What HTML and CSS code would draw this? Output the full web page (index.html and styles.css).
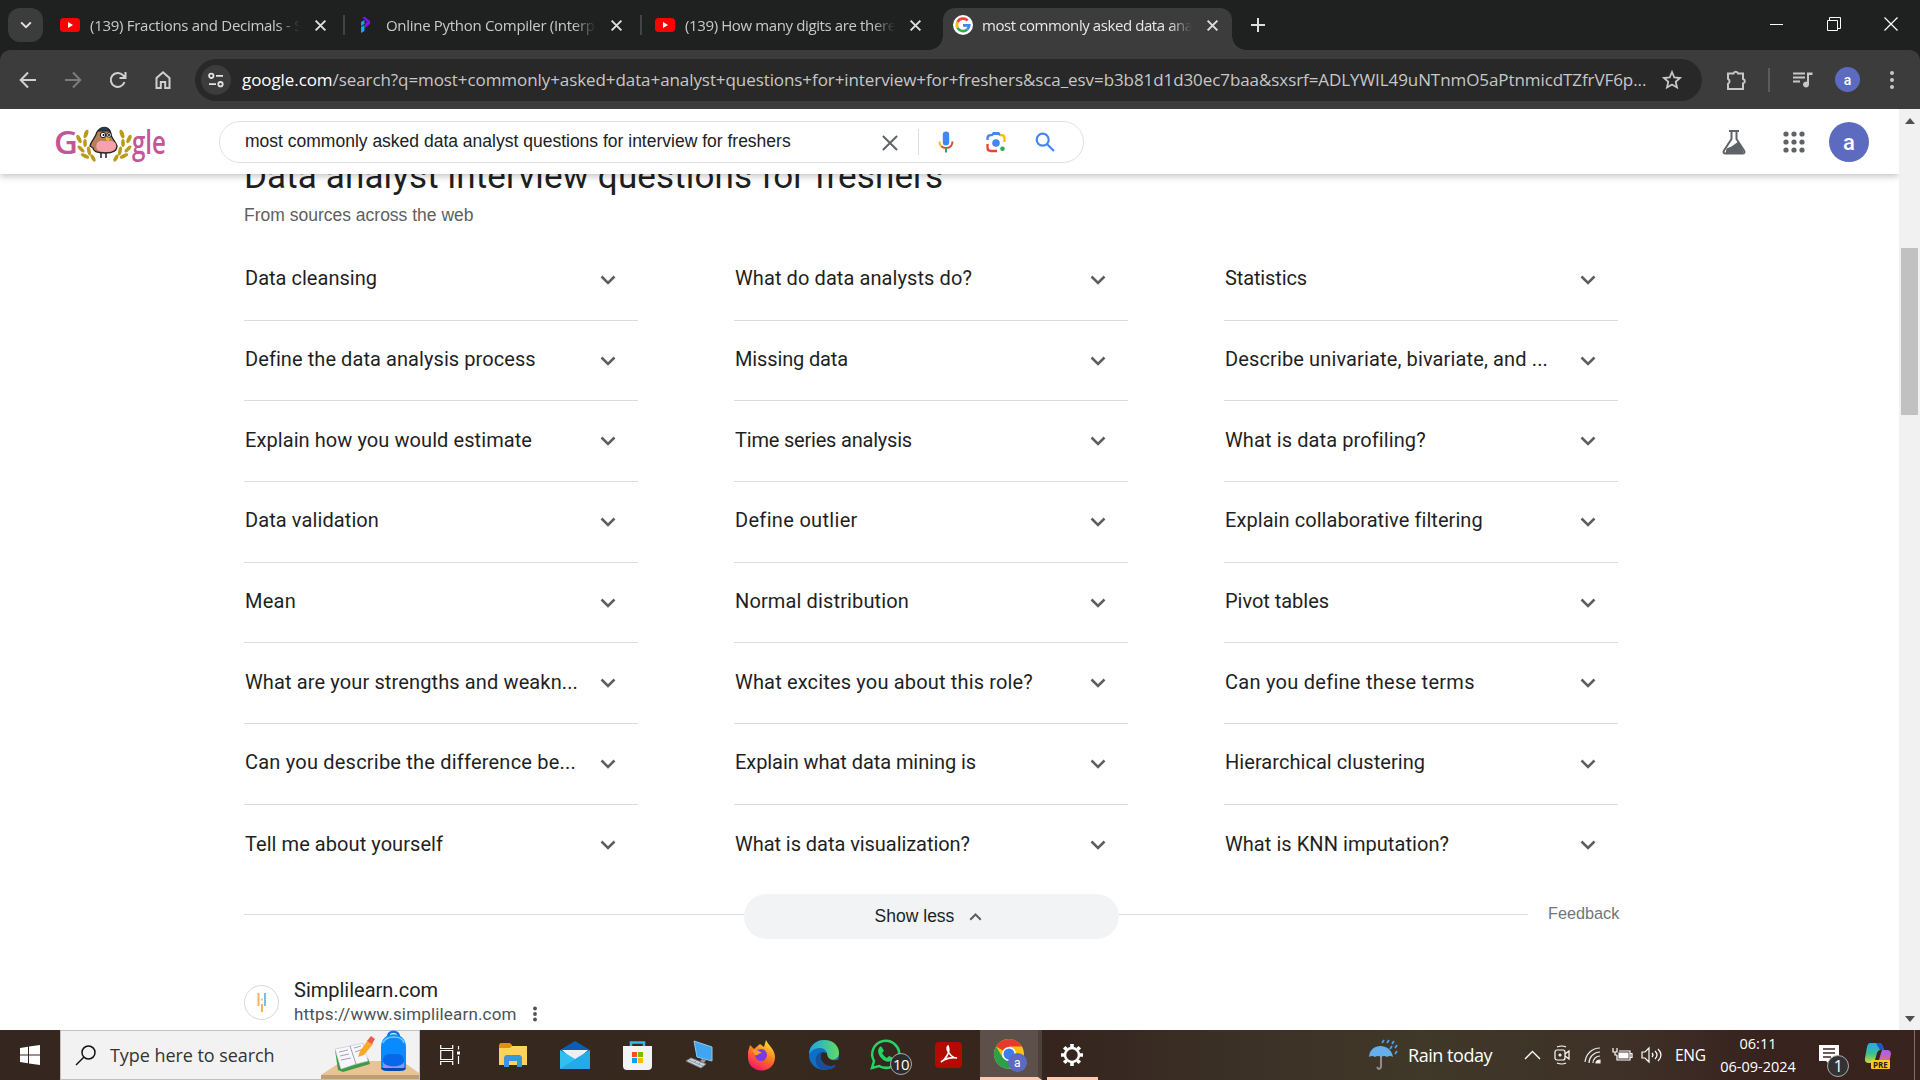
FILE: index.html
```html
<!DOCTYPE html>
<html lang="en">
<head>
<meta charset="utf-8">
<title>most commonly asked data analyst questions - Google Search</title>
<link rel="stylesheet" href="styles.css">
</head>
<body>
<svg class="defs" aria-hidden="true">
  <symbol id="x" viewBox="0 0 12 12"><path d="M1.5 1.5l9 9M10.5 1.5l-9 9" fill="none" stroke="currentColor" stroke-width="1.8"/></symbol>
  <symbol id="down" viewBox="0 0 16 10"><path d="M1.5 1.5L8 8l6.500-6.500" fill="none" stroke="currentColor" stroke-width="2.500"/></symbol>
  <symbol id="yt" viewBox="0 0 20 14"><rect width="20" height="14" rx="3.500" fill="#f00"/><path d="M8 4l5 3-5 3z" fill="#fff"/></symbol>
</svg>

<div class="tabstrip">
  <div class="tab-search"><svg width="12" height="8" viewBox="0 0 16 10"><use href="#down"/></svg></div>
  <div class="tab"><svg class="fav" width="20" height="14"><use href="#yt"/></svg><span class="tab-title t1">(139) Fractions and Decimals - SSC</span><svg class="tab-x"><use href="#x"/></svg></div>
  <div class="tab"><svg class="fav" width="20" height="20" viewBox="0 0 20 20"><path d="M6 2h3l5 4v3l-5 4V9l2-2z" fill="#7b12f5"/><path d="M5 7l3.500-2v4L5 11z" fill="#1d9bf0"/><path d="M5 12l3.500-2v6L5 18z" fill="#14a4ff"/></svg><span class="tab-title t2">Online Python Compiler (Interpreter)</span><svg class="tab-x"><use href="#x"/></svg></div>
  <div class="tab"><svg class="fav" width="20" height="14"><use href="#yt"/></svg><span class="tab-title t3">(139) How many digits are there in</span><svg class="tab-x"><use href="#x"/></svg></div>
  <div class="tab active"><svg class="fav" width="20" height="20" viewBox="0 0 48 48"><circle cx="24" cy="24" r="24" fill="#fff"/><g fill="none" stroke-width="6.500"><path d="M11 17a15 15 0 0 1 24-4" stroke="#ea4335"/><path d="M11 31a15 15 0 0 1 0-14" stroke="#fbbc05"/><path d="M34 35a15 15 0 0 1-23-4" stroke="#34a853"/><path d="M24 25h15a15 15 0 0 1-5 10" stroke="#4285f4"/></g></svg><span class="tab-title t4">most commonly asked data analyst</span><svg class="tab-x"><use href="#x"/></svg></div>
  <svg class="newtab" width="14" height="14" viewBox="0 0 14 14"><path d="M7 0v14M0 7h14" stroke="#dedede" stroke-width="2"/></svg>
  <div class="winbtns">
    <svg width="14" height="14"><path d="M0 7.500h13" stroke="#fff"/></svg>
    <svg width="14" height="14" fill="none" stroke="#fff"><path d="M.5 3.500h10v10H.5zM2.500 3V.5h11v11H11"/></svg>
    <svg width="14" height="14"><path d="M.5.5l13 13M13.500.5l-13 13" stroke="#fff" stroke-width="1.200"/></svg>
  </div>
</div>

<div class="toolbar">
  <svg class="nav" viewBox="0 0 18 18"><path d="M17 9H2M9 1.500L1.700 9 9 16.500"/></svg>
  <svg class="nav dim" viewBox="0 0 18 18"><path d="M1 9h15M9 1.500L16.300 9 9 16.500"/></svg>
  <svg class="nav" viewBox="0 0 18 18"><path d="M15.500 11A7 7 0 1 1 14 4.200l2 2M16.500 1v6h-6"/></svg>
  <svg class="nav" viewBox="0 0 18 18"><path d="M2.500 17V7L9 1.300 15.500 7v10h-4.300v-6H6.800v6z"/></svg>
  <div class="omnibox">
    <div class="site"><svg width="16" height="16" viewBox="0 0 16 16" fill="none" stroke="#e3e3e3" stroke-width="1.800"><circle cx="3.300" cy="3.800" r="2.200"/><path d="M8 3.800h7M1 12.200h7"/><circle cx="12.500" cy="12.200" r="2.200"/></svg></div>
    <span class="url"><b>google.com</b>/search?q=most+commonly+asked+data+analyst+questions+for+interview+for+freshers&amp;sca_esv=b3b81d1d30ec7baa&amp;sxsrf=ADLYWIL49uNTnmO5aPtnmicdTZfrVF6p...</span>
    <svg class="star" width="20" height="20" viewBox="0 0 20 20"><path d="M10 2l2.300 5.500 5.700.5-4.300 3.800 1.300 5.700-5-3-5 3 1.300-5.700L2 8l5.700-.5z" fill="none" stroke="#c7c7c7" stroke-width="1.800"/></svg>
  </div>
  <div class="tools">
    <svg width="22" height="22" viewBox="0 0 22 22"><path d="M2 4.500h5.500a2.300 2.300 0 0 1 4.500 0h5v5.500a2.300 2.300 0 0 1 0 4.500V20H2v-5.200a2.800 2.800 0 0 0 0-5z" fill="none" stroke="#c7c7c7" stroke-width="2"/></svg>
    <i class="bar"></i>
    <svg width="20" height="18" viewBox="0 0 20 18"><path d="M0 2.500h12M0 6.500h12M0 10.500h7" stroke="#c7c7c7" stroke-width="2"/><path d="M14 1.500h5.500v2.500H16v9.500a3 3 0 1 1-2-2.800z" fill="#c7c7c7"/></svg>
    <span class="avatar small">a</span>
    <svg width="6" height="20" viewBox="0 0 6 20" fill="#c7c7c7"><circle cx="3" cy="3" r="2"/><circle cx="3" cy="10" r="2"/><circle cx="3" cy="17" r="2"/></svg>
  </div>
</div>

<div class="window">
  <div class="page">
    <header class="header">
      <svg class="logo" width="112" height="40" viewBox="0 0 112 40">
        <text class="mark" x="-1" y="32" textLength="24" lengthAdjust="spacingAndGlyphs">G</text>
        <text class="mark" x="77" y="32" textLength="34" lengthAdjust="spacingAndGlyphs">gle</text>
        <g transform="translate(0 2)">
        <g fill="#b99a1c"><ellipse cx="31" cy="10" rx="2" ry="4.500" transform="rotate(20 31 10)"/><ellipse cx="24" cy="15" rx="2" ry="4.500" transform="rotate(-25 24 15)"/><ellipse cx="30" cy="19" rx="1.800" ry="4"/><ellipse cx="26" cy="25" rx="1.800" ry="4.500" transform="rotate(-45 26 25)"/><ellipse cx="34" cy="27" rx="1.800" ry="4.500" transform="rotate(-10 34 27)"/><ellipse cx="30" cy="32" rx="1.800" ry="4.500" transform="rotate(-65 30 32)"/><ellipse cx="38" cy="34" rx="1.800" ry="4" transform="rotate(-30 38 34)"/>
        <ellipse cx="67" cy="10" rx="2" ry="4.500" transform="rotate(-20 67 10)"/><ellipse cx="74" cy="15" rx="2" ry="4.500" transform="rotate(25 74 15)"/><ellipse cx="68" cy="19" rx="1.800" ry="4"/><ellipse cx="73" cy="25" rx="1.800" ry="4.500" transform="rotate(45 73 25)"/><ellipse cx="65" cy="27" rx="1.800" ry="4.500" transform="rotate(10 65 27)"/><ellipse cx="69" cy="32" rx="1.800" ry="4.500" transform="rotate(65 69 32)"/><ellipse cx="61" cy="34" rx="1.800" ry="4" transform="rotate(30 61 34)"/></g>
        <path d="M46 29v5M51 29v5" fill="none" stroke="#222" stroke-width="1.500"/>
        <path d="M42 8c3-5 13-5 14 2 0 4 5 8 6 12 0 5-4 7-12 7s-12-2-12-5l-3-2c1-5 5-7 7-14z" fill="#b98058" stroke="#222" stroke-width="1.300"/>
        <path d="M42 19c4-4 7-1 11-2 6-1 9 3 8 6-1 4-5 5-11 5-8 0-10-4-8-9z" fill="#f7a0ae"/>
        <path d="M43 7c2-5 11-5 12 0z" fill="#263b58" stroke="#222"/>
        <circle cx="48" cy="11" r="2.700" fill="#fff" stroke="#222"/><circle cx="54" cy="11" r="2.300" fill="#fff" stroke="#222"/><circle cx="48.500" cy="11" r="1"/><circle cx="54" cy="11" r="1"/>
        <path d="M51 13l4 1-2 4-2-2z" fill="#e5b91c"/>
        </g>
      </svg>
      <div class="searchbox">
        <span class="query">most commonly asked data analyst questions for interview for freshers</span>
        <svg class="clear" width="16" height="16" viewBox="0 0 12 12"><path d="M.7.7l10.600 10.600M11.300.7L.7 11.300" stroke="#5f6368" stroke-width="1.500"/></svg>
        <i></i>
        <svg width="24" height="24" viewBox="0 0 24 24"><rect x="8.800" y="1.500" width="6.400" height="14" rx="3.200" fill="#4285f4"/><path d="M5.500 11.500c0 2 .6 3.500 1.800 4.700" fill="none" stroke="#fbbc04" stroke-width="2"/><path d="M7.300 16.200c2.500 2.400 7 2.400 9.500 0 1.200-1.300 1.700-2.800 1.700-4.700" fill="none" stroke="#ea4335" stroke-width="2"/><path d="M12 18v4.500" stroke="#34a853" stroke-width="2"/></svg>
        <svg width="24" height="24" viewBox="0 0 24 24" fill="none" stroke-width="2.300"><path d="M3.500 10V8.500c0-2 1.500-3.300 3.300-3.300H8l1.500-2h5l1.500 2" stroke="#4285f4"/><path d="M9 2.500h6v2.500H9z" fill="#4285f4"/><path d="M16 5.200h1.500c2 0 3 1.500 3 3.300V12" stroke="#fbbc04"/><path d="M3.500 14v3.500c0 2 1.300 3.500 3.300 3.500H13" stroke="#ea4335"/><circle cx="12" cy="13" r="3.800" fill="#4285f4"/><circle cx="18.500" cy="18.800" r="2.300" fill="#34a853"/></svg>
        <svg width="22" height="22" viewBox="0 0 22 22" fill="none" stroke="#4285f4" stroke-width="2.200"><circle cx="8.700" cy="8.700" r="6"/><path d="M13 13l7 7"/></svg>
      </div>
      <div class="account">
        <svg width="24" height="26" viewBox="0 0 24 26"><path d="M7 2h10M9.500 2v8L2 21.500C1 23 1.500 24.500 3.500 24.500h17c2 0 2.500-1.500 1.500-3L14.500 10V2" fill="none" stroke="#5f6368" stroke-width="2"/><path d="M4.500 19.500l5-2 7-5 5 10-1 2h-17z" fill="#5f6368"/></svg>
        <svg width="22" height="22" viewBox="0 0 22 22" fill="#5f6368"><circle cx="3" cy="3" r="2.600"/><circle cx="11" cy="3" r="2.600"/><circle cx="19" cy="3" r="2.600"/><circle cx="3" cy="11" r="2.600"/><circle cx="11" cy="11" r="2.600"/><circle cx="19" cy="11" r="2.600"/><circle cx="3" cy="19" r="2.600"/><circle cx="11" cy="19" r="2.600"/><circle cx="19" cy="19" r="2.600"/></svg>
        <span class="avatar">a</span>
      </div>
    </header>
    <main class="results">
      <h2>Data analyst interview questions for freshers</h2>
      <p class="sub">From sources across the web</p>
      <div class="grid" id="grid"></div>
      <div class="more"><i class="l"></i><button>Show less <svg width="13" height="9" viewBox="0 0 16 10"><path d="M1.500 9L8 2.500 14.500 9" fill="none" stroke="#5e5e5e" stroke-width="2.500"/></svg></button><i class="r"></i><span>Feedback</span></div>
      <div class="result">
        <div class="fav-ring"><svg width="12" height="20" viewBox="0 0 12 20"><path d="M2.500 1v13M6 12v8" stroke="#f2b25b" stroke-width="2"/><path d="M9 1v13" stroke="#6ec3df" stroke-width="2"/><path d="M6 6.500v2" stroke="#f2b25b" stroke-width="1.500"/></svg></div>
        <div class="site-info"><span class="name">Simplilearn.com</span><span class="link"><span class="addr">https://www.simplilearn.com</span><svg width="6" height="16" viewBox="0 0 6 16" fill="#4d5156"><circle cx="3" cy="2.500" r="1.900"/><circle cx="3" cy="8" r="1.900"/><circle cx="3" cy="13.500" r="1.900"/></svg></span></div>
      </div>
    </main>
  </div>
  <div class="scroll"><svg width="10" height="6"><path d="M0 6l5-6 5 6z" fill="#505050"/></svg><div class="thumb"></div><svg width="10" height="6"><path d="M0 0l5 6 5-6z" fill="#505050"/></svg></div>
</div>

<footer class="taskbar">
  <div class="start"><svg width="20" height="20" fill="#fff"><path d="M0 3l8-1.200v7.700H0zM9 1.600L20 0v9.500H9zM0 10.500h8v7.700L0 17zM9 10.500h11V20L9 18.400z"/></svg></div>
  <div class="tsearch">
    <svg width="21" height="21" viewBox="0 0 21 21" fill="none" stroke="#111" stroke-width="1.500"><circle cx="13.500" cy="7.500" r="6.500"/><path d="M9 12L1 20"/></svg>
    <span>Type here to search</span>
    <svg class="art" width="98" height="47" viewBox="0 0 98 47">
      <path d="M0 43l21-14h60l17 12v2z" fill="#e8c396"/><path d="M0 43h98v4H0z" fill="#c39c70"/>
      <path d="M14 18l3 20 5 2 27-8-2-6z" fill="#3d9b45"/><path d="M14 17l15-3 13-3 5 18-12 3-15 5z" fill="#f7f7fd" stroke="#c7c7da" stroke-width=".7"/><path d="M29 14l6 18M18 20l9-2M19 24l9-2M20 28l10-2M33 16l7-2M34 20l8-3" stroke="#8b8b9c" stroke-width=".8"/>
      <path d="M37 25l2-6 8-11 5 4-9 11z" fill="#f7a928"/><path d="M46 9l4-5 4 3-3 5z" fill="#ec5c4b"/>
      <path d="M67 5c0-7 11-7 11 0" fill="none" stroke="#1174e6" stroke-width="2.500"/><path d="M60 15c0-17 25-17 25 0v20c0 4-3 4-12 4s-13 0-13-4z" fill="#0a8aff"/><path d="M62 11c3-8 19-8 21 0" fill="none" stroke="#72caff" stroke-width="1.500"/><rect x="62" y="22" width="21" height="14" rx="6" fill="#0667e8"/><path d="M62 29c0 7 21 7 21 0v6c-2 3-19 3-21 0z" fill="#9d8cff"/><path d="M60 36h25c-1 3-4 3-12 3s-12 0-13-3z" fill="#0848ae"/>
    </svg>
  </div>
  <div class="apps">
    <div class="view"><svg width="21" height="20" fill="none" stroke="#fff" stroke-width="1.200"><path d="M.7 0v3.500h12V0M.7 5.500h12v9H.7zM.7 20v-3.500h12V20M18.500 1v3.500M18.500 11v8"/><path d="M17 6.500h3v3h-3z" fill="#fff" stroke="none"/></svg></div>
    <div><svg width="28" height="24"><path d="M0 1.500L1.500 0H11l2 2v5H0z" fill="#dc9500"/><path d="M0 5h11l2-2h15v19H0z" fill="#ffd35b"/><path d="M5 24V14l2-2h14l2 2v10h-5v-6h-8v6z" fill="#3a96dd"/></svg></div>
    <div><svg width="30" height="28"><path d="M0 9L15 0l15 9v5H0z" fill="#0a5fb4"/><path d="M2 9h26l-13 12z" fill="#eceff4"/><path d="M0 9l15 9 15-9v19H0z" fill="#31bff0"/><path d="M15 18l15 10H0L30 9v19z" fill="#1b9de2" opacity=".6"/></svg></div>
    <div><svg width="29" height="29"><path d="M8 6V1.500h13V6" fill="none" stroke="#36b7ef" stroke-width="2.500"/><path d="M0 5h29v20q0 4-4 4H4q-4 0-4-4z" fill="#f3f3f3"/><path d="M9 11h5v5H9z" fill="#f25022"/><path d="M15 11h5v5h-5z" fill="#7fba00"/><path d="M9 17h5v5H9z" fill="#00a4ef"/><path d="M15 17h5v5h-5z" fill="#ffb900"/></svg></div>
    <div><svg width="30" height="28"><path d="M9 0l18 6v14L12 16z" fill="#42a5f0" stroke="#8dcaf2"/><path d="M17 18l4 1-2 3-4-2z" fill="#8f9ba5"/><path d="M1 20l5-3 15 6-5 4z" fill="#cdd5db" stroke="#7b8790"/><path d="M4 19l14 6M9 22l3-3M13 24l3-3" stroke="#8c9ba8"/></svg></div>
    <div><svg width="29" height="30"><defs><linearGradient id="fx" x1=".8" y1="0" x2=".3" y2="1"><stop stop-color="#ffe83b"/><stop offset=".5" stop-color="#ff7a1c"/><stop offset="1" stop-color="#f5156c"/></linearGradient></defs><path d="M1 12l2-7 4 4 6-5 4 3 2-7c2 5 9 9 9 17 0 18-27 18-27 0z" fill="url(#fx)"/><circle cx="14" cy="15" r="6" fill="#7a3ce0"/><path d="M5 10c4-1 7 1 10 3-3 0-4 3-7 2z" fill="#ff9b2a"/></svg></div>
    <div><svg width="30" height="30" viewBox="0 0 30 30"><defs><linearGradient id="eg"><stop stop-color="#1ba4ea"/><stop offset="1" stop-color="#62dc61"/></linearGradient></defs><circle cx="15" cy="15" r="15" fill="#0f6fc4"/><path d="M0 14C1-5 30-4 30 13c0 7-8 8-12 6-2-1 0-3 0-5C17 6 5 6 0 14z" fill="url(#eg)"/><path d="M13 12c-4 6 1 15 10 14l5-2 1 2 2-4-2-2c-6 1-11-1-11-7z" fill="#35271f"/><path d="M13 12c-4 6 0 14 9 14h5c-6 6-18 5-20-3-1-6 1-10 6-11z" fill="#164f9e"/></svg></div>
    <div><svg width="34" height="32" viewBox="0 0 34 32"><path d="M3 29l2-7A13.500 13.500 0 1 1 10 27z" fill="none" stroke="#25d366" stroke-width="2.500"/><path d="M10 9c2-3 3-1 5 3l-2 2c2 3 3 4 5 5l2-2c3 1 5 2 3 4-6 6-17-6-13-12z" fill="#25d366"/></svg><span class="badge">10</span></div>
    <div><svg width="27" height="26"><rect width="27" height="26" rx="4" fill="#b30b00"/><path d="M6 20c4-2 10-10 7-16-3 3 3 12 9 12-4-1-12 0-16 4z" fill="none" stroke="#fff" stroke-width="1.600"/></svg></div>
    <div class="on"><svg width="30" height="30" viewBox="0 0 30 30"><circle cx="15" cy="15" r="15" fill="#fbc116"/><path d="M15 15L2 7.500A15 15 0 0 1 28 7.500H15z" fill="#e33b2e"/><path d="M2 7.500A15 15 0 0 0 15 30l6-11-12 0z" fill="#2d9f48"/><circle cx="15" cy="15" r="7" fill="#fff"/><circle cx="15" cy="15" r="5.500" fill="#3d7df0"/></svg><span class="badge pro">a</span></div>
    <div class="open"><svg width="24" height="24" viewBox="-12 -12 24 24" fill="none" stroke="#fff"><circle r="7" stroke-width="2.500"/><path d="M0-7.500v-3.500M0 7.500v3.500M-7.500 0h-3.500M7.500 0h3.500M-5.400-5.400l-2.400-2.400M5.400 5.400l2.400 2.400M-5.400 5.400l-2.400 2.400M5.400-5.400l2.400-2.400" stroke-width="3.600"/></svg></div>
  </div>
  <div class="tray">
    <svg width="30" height="32" viewBox="0 0 30 32"><path d="M13 15v13q-2 4-4 0" fill="none" stroke="#8d8d8d" stroke-width="2"/><path d="M1 18C2 3 23 4 25 18q-3-2-6 0-3-2-6 0-3-2-6 0-3-2-6 0z" fill="#63b0ed"/><path d="M16 1l-2 3M21 1l-2 3M26 2l-2 3M24 7l-2 3M29 6l-2 3M29 12l-2 3" stroke="#4ba2ec" stroke-width="1.800"/></svg>
    <span class="weather">Rain today</span>
    <svg class="up" width="17" height="10"><path d="M1 9l7.500-7.500L16 9" fill="none" stroke="#fff" stroke-width="1.400"/></svg>
    <svg class="cam" width="16" height="20" fill="none" stroke="#fff" stroke-width="1.200"><rect x="1" y="5" width="10" height="10" rx="2"/><path d="M11 9l4-3v8l-4-3M3 2q5-2 9 0M3 18q5 2 9 0"/><circle cx="6" cy="10" r="1"/></svg>
    <svg class="wifi" width="17" height="17" fill="none" stroke="#e8e8e8" stroke-width="1.200"><path d="M1 15C2 7 8 1 16 1M5 16C5 10 10 5 16 5M9 16c0-4 3-7 7-7"/><path d="M12 16q0-3 4-3v3z" fill="#fff"/></svg>
    <svg class="bat" width="21" height="15" fill="none" stroke="#fff" stroke-width="1.200"><path d="M7 3h11v9H5V7M18 5.500h2v4h-2M1 0v4h4V0M3 4v3h2"/><path d="M7 5h9v5H7z" fill="#fff"/></svg>
    <svg class="vol" width="22" height="16" fill="none" stroke="#fff" stroke-width="1.200"><path d="M1 5v6h3l4 4V1L4 5zM11 6q2 2 0 4M14 4q4 4 0 8M17 2q6 6 0 12"/></svg>
    <span class="lang">ENG</span>
    <span class="clock"><span class="time">06:11</span><span class="date">06-09-2024</span></span>
    <div class="note"><svg width="20" height="20"><path d="M0 0h20v16h-9v4l-4-4H0z" fill="#fff"/><path d="M4 4h12M4 8h12M4 12h8" stroke="#3a2a24" stroke-width="1.300"/></svg><span class="badge">1</span></div>
    <div class="copilot"><svg width="26" height="24"><defs><linearGradient id="cp" x1="0" x2="0" y1="0" y2="1"><stop stop-color="#25a9ef"/><stop offset=".55" stop-color="#3fc08a"/><stop offset="1" stop-color="#d8d63a"/></linearGradient><linearGradient id="cq" x1="0" x2="0" y1="0" y2="1"><stop stop-color="#a65cf5"/><stop offset="1" stop-color="#fa6e63"/></linearGradient></defs><path d="M5 0h9q3 0 4 4l1 3h-4q-2 0-3 3l-2 7q-1 3-4 3H4q-5 0-4-5L2 4q1-4 3-4z" fill="url(#cp)"/><path d="M11 0h3q3 0 4 4l1 3h-4z" fill="#1b57c9"/><path d="M17 7h5q4 0 4 4l-2 9q-1 3-4 3h-8z" fill="url(#cq)"/></svg><span class="pre">PRE</span></div>
    <i class="edge"></i>
  </div>
</footer>
<script src="app.js"></script>
</body>
</html>
```
FILE: app.js
```js
// Each row: [label, label width in px] for the three columns.
const questions = [
  [["Data cleansing", 132], ["What do data analysts do?", 237], ["Statistics", 82]],
  [["Define the data analysis process", 290], ["Missing data", 113], ["Describe univariate, bivariate, and ...", 323]],
  [["Explain how you would estimate", 287], ["Time series analysis", 177], ["What is data profiling?", 200]],
  [["Data validation", 134], ["Define outlier", 122], ["Explain collaborative filtering", 257]],
  [["Mean", 51], ["Normal distribution", 174], ["Pivot tables", 104]],
  [["What are your strengths and weakn...", 333], ["What excites you about this role?", 298], ["Can you define these terms", 249]],
  [["Can you describe the difference be...", 331], ["Explain what data mining is", 241], ["Hierarchical clustering", 200]],
  [["Tell me about yourself", 198], ["What is data visualization?", 235], ["What is KNN imputation?", 224]]
];
const grid = document.getElementById("grid");
grid.innerHTML = questions.flat().map(([label]) =>
  `<div class="q"><span>${label}</span><svg width="16" height="10"><use href="#down"/></svg></div>`).join("");
grid.querySelectorAll("span").forEach((span, i) => {
  const [label, width] = questions.flat()[i];
  const spacing = (width - span.getBoundingClientRect().width) / label.length;
  span.style.letterSpacing = `${spacing.toFixed(3)}px`;
});
```
FILE: styles.css
```css
* { box-sizing: border-box; }
body { margin: 0; width: 1920px; height: 1080px; overflow: hidden; display: flex; flex-direction: column; background: #fff; font-family: "Liberation Sans", Arial, sans-serif; white-space: nowrap; }
svg { display: block; flex: none; overflow: visible; }
.defs { position: absolute; width: 0; height: 0; }

.tabstrip { height: 50px; flex: none; background: #1f2120; display: flex; align-items: flex-start; padding: 8px 0 0 8px; font: 15px "Open Sans", "Noto Sans", sans-serif; color: #c9c9c9; }
.tab-search { width: 35px; height: 34px; border-radius: 12px; background: #3c3c3c; display: grid; place-items: center; color: #e3e3e3; margin-right: 7px; }
.tab { width: 297px; height: 34px; display: flex; align-items: center; padding-left: 10px; position: relative; }
.tab:nth-child(2) { width: 296px; }
.tab:nth-child(2), .tab:nth-child(3) { background: linear-gradient(#444, #444) right 1px center / 2px 20px no-repeat; }
.tab:nth-child(4) { width: 300px; padding-left: 12px; }
.fav { width: 20px; margin-right: 10px; }
.tab-title { width: 211px; overflow: hidden; -webkit-mask: linear-gradient(to right, #000 187px, transparent 210px); mask: linear-gradient(to right, #000 187px, transparent 210px); }
.tab-x { width: 13px; height: 13px; margin-left: 13px; color: #dedede; }
.t1 { letter-spacing: -.28px; } .t2 { letter-spacing: -.3px; } .t3 { letter-spacing: -.38px; } .t4 { letter-spacing: -.42px; }
.active { width: 289px; height: 42px; background: #3c3c3c; border-radius: 12px 12px 0 0; color: #e8e8e8; padding: 0 0 8px 10px; }
.active .fav { margin-right: 9px; }
.active::before, .active::after { content: ""; position: absolute; bottom: 0; width: 14px; height: 14px; }
.active::before { left: -14px; background: radial-gradient(circle at 0 0, transparent 13.5px, #3c3c3c 14px); }
.active::after { right: -14px; background: radial-gradient(circle at 100% 0, transparent 13.5px, #3c3c3c 14px); }
.newtab { margin: 10px 0 0 19px; }
.winbtns { display: flex; gap: 43px; margin: 9px 22px 0 auto; }

.toolbar { height: 59px; flex: none; background: #3c3c3c; display: flex; align-items: center; padding-left: 19px; border-radius: 10px 10px 0 0; }
body { background: linear-gradient(#1f2120 70px, #fff 70px); }
.nav { width: 18px; height: 18px; margin-right: 27px; fill: none; stroke: #d0d0d0; stroke-width: 2; }
.dim { stroke: #7c7c7c; }
.omnibox { width: 1507px; height: 42px; border-radius: 21px; background: #282828; display: flex; align-items: center; padding-left: 6px; margin-left: -4px; }
.site { width: 30px; height: 30px; border-radius: 50%; background: #3c3c3c; display: grid; place-items: center; margin-right: 11px; }
.url { width: 1415px; font: 17px "Open Sans", "Noto Sans", sans-serif; letter-spacing: -.08px; color: #c7c7c7; }
.url b { font-weight: 400; color: #fff; }
.star { margin-left: 5px; }
.tools { display: flex; align-items: center; margin-left: 24px; }
.bar { width: 2px; height: 24px; background: #5b5b5b; margin: 0 23px 0 20px; }
.avatar { width: 40px; height: 40px; border-radius: 50%; background: #5c6bc0; color: #fff; font: 500 22px Roboto, sans-serif; display: grid; place-items: center; }
.small { width: 25px; height: 25px; font-size: 14px; margin: 0 29px 0 22px; }

.window { height: 921px; flex: none; display: flex; background: #fff; }
.page { width: 1899px; height: 921px; overflow: hidden; position: relative; }
.header { height: 65px; display: flex; align-items: center; padding: 1px 0 0 55px; background: #fff; box-shadow: 0 2px 7px rgba(0,0,0,.25); position: relative; z-index: 2; }
.mark { font: 600 32px "Open Sans", sans-serif; fill: #c65598; }
.logo { margin-right: 52px; }
.searchbox { width: 865px; height: 42px; border: 1px solid #dfe1e5; border-radius: 21px; display: flex; align-items: center; padding-left: 25px; }
.query { width: 637px; font-size: 17.5px; color: #202124; padding-bottom: 2px; }
.clear { margin-right: 20px; position: relative; top: 1px; }
.searchbox i { width: 1px; height: 26px; background: #dadce0; margin-right: 15px; }
.searchbox svg + svg { margin-left: 26px; }
.account { display: flex; align-items: center; margin-left: auto; padding-right: 30px; }
.account svg { margin-right: 37px; } .account svg + svg { margin-right: 24px; }

.results { padding-left: 244px; font-family: "Liberation Sans", Arial, sans-serif; }
h2 { margin: -18px 0 0; height: 43px; font: 35px/42px Roboto, sans-serif; letter-spacing: .13px; color: #1f1f1f; }
.sub { margin: 5px 0 0; height: 22px; font-size: 17.5px; line-height: 22px; color: #5e5e5e; }
.grid { width: 1376px; margin: 14px 0 0; display: grid; grid-template-columns: repeat(3, 394px); column-gap: 96px; grid-auto-rows: 80.700px; }
.q { display: flex; align-items: center; justify-content: space-between; padding: 0 22px 3px 1px; border-bottom: 1px solid #dadce0; font: 20px Roboto, sans-serif; color: #1f1f1f; }
.q svg { color: #5e5e5e; margin-top: 3px; }
.q:nth-child(n+22) { border: 0; }
.more { display: flex; align-items: flex-start; height: 45px; margin-top: 8px; }
.more i { height: 1px; background: #dadce0; margin-top: 20px; }
.more .l { width: 500px; } .more .r { width: 409px; }
.more button { width: 375px; height: 45px; border: 0; padding: 0 6px 0 0; border-radius: 23px; background: #f1f3f4; font: 17.5px "Liberation Sans", Arial, sans-serif; color: #1f1f1f; display: flex; justify-content: center; align-items: center; gap: 15px; }
.more span { font-size: 16.250px; color: #70757a; margin: 10px 0 0 20px; }
.result { display: flex; margin-top: 38px; }
.fav-ring { width: 35px; height: 35px; border: 1px solid #d5d7db; border-radius: 50%; margin: 8px 15px 0 0; display: grid; place-items: center; }
.site-info { display: flex; flex-direction: column; font-family: Roboto, sans-serif; }
.name { font-size: 20px; line-height: 26px; color: #202124; }
.link { display: flex; align-items: center; gap: 17px; font-size: 17px; line-height: 23px; color: #4d5156; }
.addr { width: 221px; letter-spacing: .17px; }
.scroll { width: 21px; background: #f1f1f1; display: flex; flex-direction: column; align-items: center; padding: 9px 0 8px; }
.thumb { width: 17px; height: 167px; background: #c1c1c1; margin: 124px 0 auto; }

.taskbar { height: 50px; flex: none; display: flex; background: linear-gradient(90deg, #35261f 0, #38291f 40%, #35251e 55%, #3b3026 64%, #403829 74%, #3e3027 85%, #38221e 92%, #38231f); font-family: "Open Sans", "Noto Sans", sans-serif; color: #fff; }
.start { width: 60px; display: grid; place-items: center; }
.tsearch { width: 360px; height: 50px; background: #f2f2f2; border: 1px solid #c0c0c0; display: flex; align-items: center; padding-left: 14px; color: #333; font-size: 18px; }
.tsearch span { margin-left: 14px; width: 212px; letter-spacing: -.06px; }
.apps { display: flex; }
.apps > div { width: 62.200px; display: grid; place-items: center; position: relative; }
.apps .view { width: 62px; padding-right: 1px; }
.badge { position: absolute; left: 35px; top: 23px; width: 22px; height: 22px; border: 1px solid #aaa; border-radius: 50%; background: #2c2c2c; font-size: 15px; line-height: 20px; display: grid; place-items: center; letter-spacing: -.5px; }
.badge.pro { left: 28px; top: 23px; width: 19px; height: 19px; background: #5c6bc0; border: 0; font: 12px/18px Roboto, sans-serif; }
.apps .on { background: #5d4f4a; border-bottom: 3px solid #fbcab3; border-right: 4px solid #4c413b; }
.apps .open { padding-right: 2px; }
.apps .open::after { content: ""; position: absolute; left: 5px; bottom: 0; width: 51px; height: 3px; background: #fbcab3; }
.tray { display: flex; align-items: center; margin-left: auto; }
.weather { font-size: 18px; letter-spacing: -.45px; width: 86px; margin: 0 30px 0 10px; }
.cam { margin-left: 13px; } .wifi { margin-left: 14px; } .bat { margin-left: 11px; } .vol { margin-left: 8px; }
.lang { font-size: 15.500px; width: 30px; margin-left: 12px; letter-spacing: -.3px; }
.clock { width: 106px; display: flex; flex-direction: column; align-items: center; font-size: 14.500px; line-height: 23px; }
.note { position: relative; margin-left: 8px; width: 20px; }
.note .badge { left: 8px; top: 10px; background: #333; font-size: 16px; }
.copilot { position: relative; margin-left: 26px; }
.pre { position: absolute; left: 6px; top: 17px; background: #ffc91c; color: #222; font: bold 8px/9px "Open Sans", sans-serif; padding: 0 2px; border-radius: 1px; }
.edge { width: 1px; height: 50px; background: #7d706b; margin: 0 5px 0 23px; }
```
